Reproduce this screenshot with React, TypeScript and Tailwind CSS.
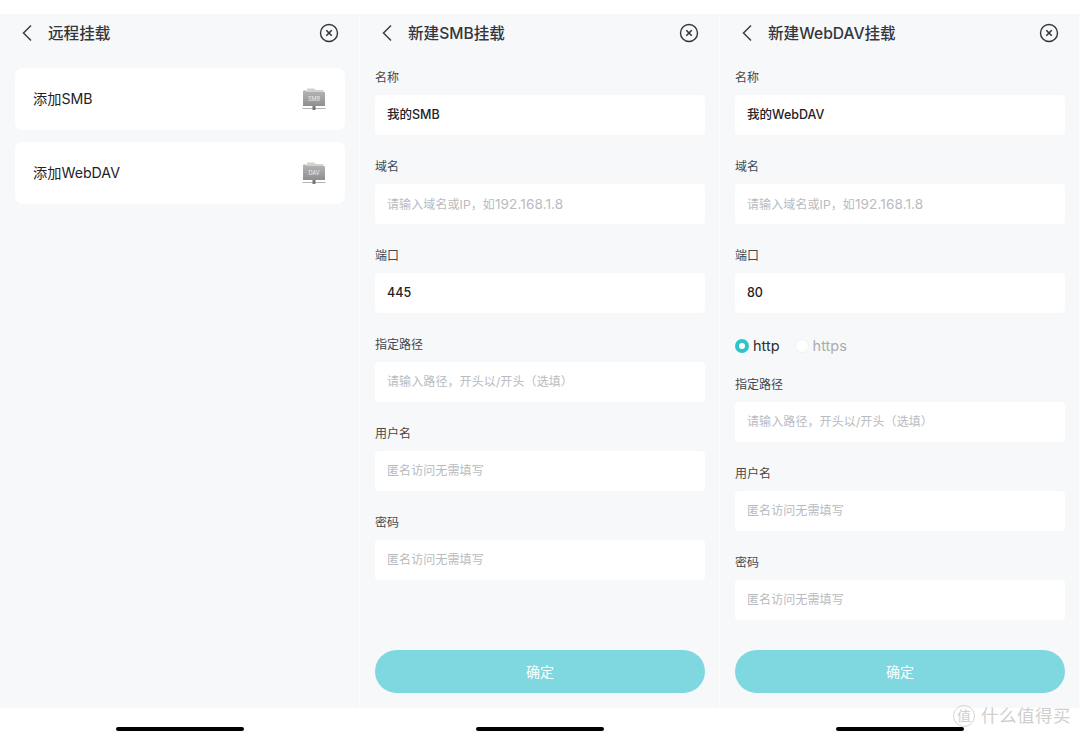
import React from 'react';

const font = { fontFamily: '"Inter", "Noto Sans CJK SC", sans-serif' };

const BackIcon = () => (
  <svg width="12" height="18" viewBox="0 0 12 18" fill="none" stroke="#3a3d42" strokeWidth="1.5">
    <path d="M10 1.5 L2.5 9 L10 16.5" />
  </svg>
);

const CloseIcon = () => (
  <svg width="20" height="20" viewBox="0 0 20 20" fill="none" stroke="#33363b">
    <circle cx="10" cy="10" r="8.5" strokeWidth="1.4" />
    <path d="M7.3 7.3 L12.7 12.7 M12.7 7.3 L7.3 12.7" strokeWidth="1.6" />
  </svg>
);

const FolderIcon = ({ label, id }: { label: string; id: string }) => (
  <svg width="24" height="24" viewBox="0 0 24 24">
    <defs>
      <linearGradient id={id} x1="0" y1="0" x2="0" y2="1">
        <stop offset="0" stopColor="#b5b5b5" />
        <stop offset="1" stopColor="#8f8f8f" />
      </linearGradient>
    </defs>
    <path d="M5 1.5 H12 L14 3 H21.5 V5 H5 Z" fill="#d2d2d2" />
    <path d="M1 4.5 Q1 3.5 2 3.5 H4 L5 5 H22 Q23 5 23 6 V19 H1 Z" fill={`url(#${id})`} />
    <text x="12" y="14.3" textAnchor="middle" fontSize="5.5" fill="#ececec" style={font}>{label}</text>
    <rect x="0.5" y="21.2" width="23" height="0.8" fill="#a0a0a0" />
    <rect x="10.5" y="19" width="3" height="4" fill="#777" />
  </svg>
);

const Header = ({ title }: { title: string }) => (
  <div className="h-[38px] flex items-center justify-between px-[21px] shrink-0">
    <div className="flex items-center gap-[15px]">
      <BackIcon />
      <span className="text-[15.6px] leading-[24px] pt-[2px] font-medium text-[#33363b]">{title}</span>
    </div>
    <CloseIcon />
  </div>
);

const Field = ({ label, value, placeholder }: { label: string; value?: string; placeholder?: React.ReactNode }) => (
  <div className="flex flex-col gap-[9px]">
    <div className="h-[18px] leading-[20px] text-[12px] text-[#44474c]">{label}</div>
    <div className="h-[40px] bg-white rounded-[4px] px-[12px] flex items-center text-[12.5px]">
      {value ? (
        <span className="font-medium text-[#1f2226] pt-[1px]">{value}</span>
      ) : (
        <span className="text-[12px] tracking-[0.1px] text-[#b9bbbf]">{placeholder}</span>
      )}
    </div>
  </div>
);

const Panel = ({ children }: { children: React.ReactNode }) => (
  <div className="w-[360px] h-[739px] flex flex-col bg-white">
    <div className="h-[14px] shrink-0" />
    <div className="h-[694px] bg-[#f7f8fa] flex flex-col shadow-[inset_-1px_0_0_#fbfcfd]">{children}</div>
    <div className="flex-1 flex justify-center items-end pb-[8px]">
      <div className="w-[128px] h-[4px] rounded-full bg-black" />
    </div>
  </div>
);

const Confirm = () => (
  <button className="mt-auto mb-[15px] mx-[15px] h-[43px] rounded-full bg-[#7fd8df] text-white text-[14px] shrink-0">
    确定
  </button>
);

const AddRow = ({ label, tag, id }: { label: string; tag: string; id: string }) => (
  <div className="h-[62px] bg-white rounded-[8px] pl-[18px] pr-[19px] flex items-center justify-between">
    <span className="text-[14.2px] leading-[20px] text-[#1f2226]">{label}</span>
    <FolderIcon label={tag} id={id} />
  </div>
);

const HostHint = () => (
  <>
    请输入域名或IP，如<span className="text-[13.6px]">192.168.1.8</span>
  </>
);

export default function App() {
  return (
    <div className="relative w-[1080px] h-[739px] flex overflow-hidden bg-white" style={font}>
      <Panel>
        <Header title="远程挂载" />
        <div className="px-[15px] pt-[16px] flex flex-col gap-[12px]">
          <AddRow label="添加SMB" tag="SMB" id="f1" />
          <AddRow label="添加WebDAV" tag="DAV" id="f2" />
        </div>
      </Panel>

      <Panel>
        <Header title="新建SMB挂载" />
        <div className="px-[15px] pt-[16px] flex flex-col gap-[22px]">
          <Field label="名称" value="我的SMB" />
          <Field label="域名" placeholder={<HostHint />} />
          <Field label="端口" value="445" />
          <Field label="指定路径" placeholder="请输入路径，开头以/开头（选填）" />
          <Field label="用户名" placeholder="匿名访问无需填写" />
          <Field label="密码" placeholder="匿名访问无需填写" />
        </div>
        <Confirm />
      </Panel>

      <Panel>
        <Header title="新建WebDAV挂载" />
        <div className="px-[15px] pt-[16px] flex flex-col gap-[22px]">
          <Field label="名称" value="我的WebDAV" />
          <Field label="域名" placeholder={<HostHint />} />
          <Field label="端口" value="80" />
          <div className="flex items-center h-[18px] mt-[2px] -mb-[2px] text-[14.5px]">
            <span className="w-[14px] h-[14px] rounded-full bg-[#2fc4cb] flex items-center justify-center">
              <span className="w-[6px] h-[6px] rounded-full bg-white" />
            </span>
            <span className="ml-[4px] text-[#2b2e33]">http</span>
            <span className="ml-[15px] w-[14px] h-[14px] rounded-full bg-white border border-[#f0f1f3]" />
            <span className="ml-[4px] text-[#a9abaf]">https</span>
          </div>
          <Field label="指定路径" placeholder="请输入路径，开头以/开头（选填）" />
          <Field label="用户名" placeholder="匿名访问无需填写" />
          <Field label="密码" placeholder="匿名访问无需填写" />
        </div>
        <Confirm />
      </Panel>

      {/* site watermark */}
      <div className="absolute right-[9px] bottom-[10px] flex items-center gap-[6px] text-[#cfcfcf]">
        <span className="w-[22px] h-[22px] rounded-full border border-[#d6d6d6] flex items-center justify-center text-[14px]">值</span>
        <span className="text-[17.5px] tracking-[0.5px]">什么值得买</span>
      </div>
    </div>
  );
}
